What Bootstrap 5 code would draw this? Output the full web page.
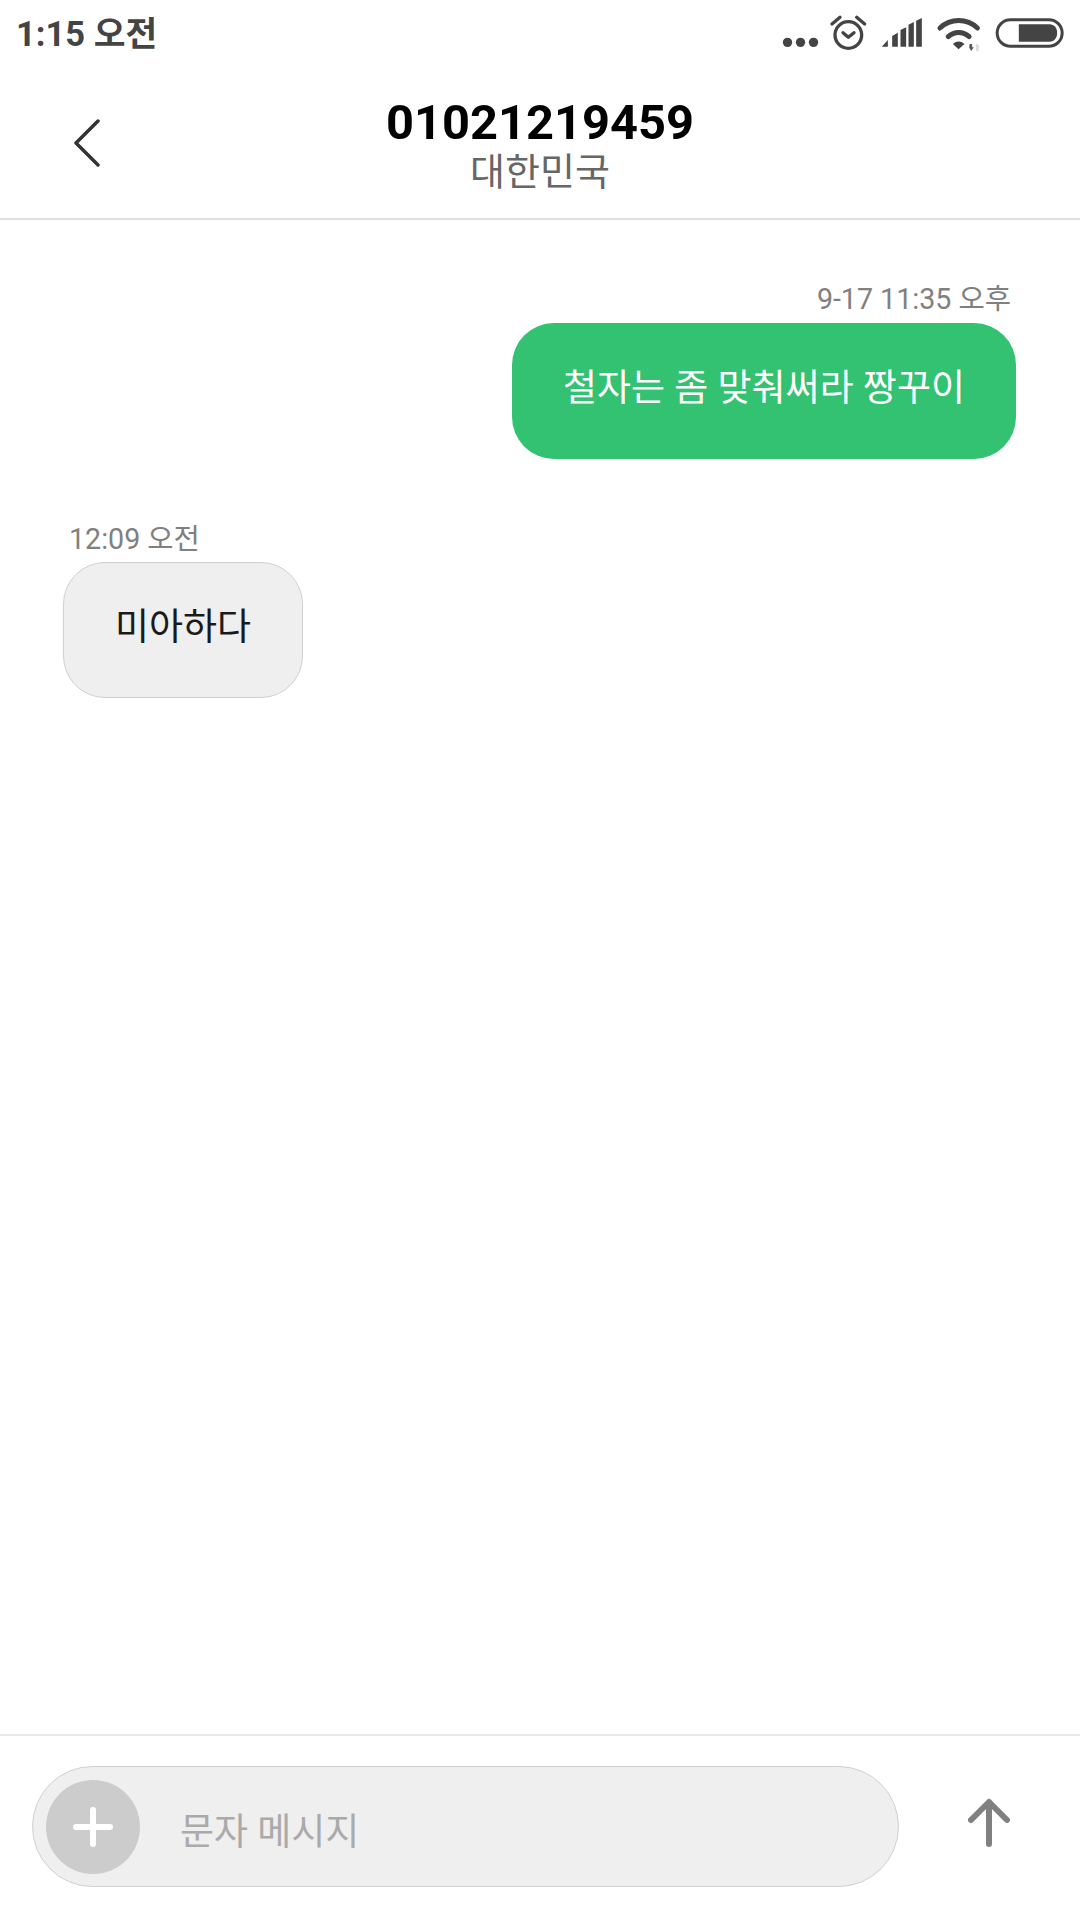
<!DOCTYPE html>
<html lang="ko">
<head>
    <meta charset="UTF-8" />
    <meta name="viewport" content="width=device-width, initial-scale=1" />
    <title>01021219459</title>

    <!-- Bootstrap 5 CSS -->
    <link href="https://cdn.jsdelivr.net/npm/bootstrap@5.3.0/dist/css/bootstrap.min.css" rel="stylesheet">

    <style>
        body {
            background-color: #fff;
            font-family: Roboto, "Noto Sans CJK KR", sans-serif;
        }
        .phone-screen { width: 1080px; height: 1920px; }
        .status-row { height: 62px; padding: 0 12px 0 16px; }
        .status-time { font-size: 34.5px; font-weight: 700; color: #444; line-height: 68px; }
        .top-header {
            height: 158px;
            border-bottom: 2px solid #e0e0e0;
            display: grid;
            grid-template-columns: 1fr auto 1fr;
            padding-top: 10px;
        }
        .back-btn { padding-left: 73px; margin-bottom: 4px; }
        .peer-number { font-size: 48.8px; font-weight: 700; color: #000; line-height: 54px; }
        .peer-country { font-size: 38px; color: #666; line-height: 44px; }
        .chat-area { padding: 61px 64px 0 63px; }
        .msg-time { font-size: 28.6px; color: #808080; line-height: 36px; margin-bottom: 6px; }
        .msg-time-in { padding-left: 6px; margin-top: 62px; margin-bottom: 5px; }
        .msg-time-out { padding-right: 5px; }
        .bubble-out, .bubble-in {
            height: 136px;
            border-radius: 42px;
            font-size: 37px;
            padding-bottom: 5px;
        }
        .bubble-out { background-color: #33c172; color: #fff; width: 504px; }
        .bubble-in { background-color: #efefef; color: #1a1a1a; width: 240px; border: 1px solid #d0d0d0; }
        .compose-bar { height: 186px; border-top: 2px solid #e8e8e8; padding: 30px 0 0 32px; }
        .compose-box {
            width: 867px;
            height: 121px;
            background-color: #efefef;
            border: 1px solid #d0d0d0;
            border-radius: 61px;
            padding-left: 13px;
        }
        .plus-circle { width: 94px; height: 94px; background-color: #cccccc; }
        .compose-hint { font-size: 37px; color: #aaa; margin-left: 40px; padding-top: 12px; }
        .send-btn { margin-left: 69px; margin-top: 32px; }
    </style>
</head>
<body class="m-0">

<div class="phone-screen d-flex flex-column">

    <!-- status bar -->
    <div class="status-row d-flex justify-content-between">
        <div class="status-time">1:15 오전</div>
        <div class="d-flex">
            <svg width="47" height="70" viewBox="60 0 140 210" fill="#444"><circle cx="85" cy="127" r="14"/><circle cx="124" cy="127" r="14"/><circle cx="163" cy="127" r="14"/></svg>
            <svg width="50" height="70" viewBox="200 0 150 210" fill="none" stroke="#444" stroke-width="10" stroke-linecap="round" stroke-linejoin="round"><circle cx="267" cy="105" r="40"/><path d="M218 72 242 52M292 52 316 72M251 98 267 112 284 98"/></svg>
            <svg width="57" height="70" viewBox="350 0 170 210" fill="#444"><path d="M367 140 385 120V140ZM398 140V108L415 98V140ZM423 140V90L440 82V140ZM447 140V74L463 66V140ZM470 140V62L487 54V140Z"/></svg>
            <svg width="58" height="70" viewBox="520 0 175 210"><path d="M541 84C573 54 622 54 654 84M566 110C584 93 611 93 629 110" fill="none" stroke="#444" stroke-width="15" stroke-linecap="round"/><path d="M580 132C591 122 604 122 615 132L597 148Z" fill="#444"/><path d="M631 132H638V142H643L635 153 629 142Z" fill="#555"/><path d="M650 153V132H654L662 142H658V153Z" fill="#ddd"/></svg>
            <svg width="77" height="70" viewBox="695 0 230 210"><rect x="713" y="59" width="195" height="80" rx="40" fill="none" stroke="#444" stroke-width="9"/><path d="M778 73H870C885 73 893 85 893 99S885 125 870 125H778Z" fill="#444"/></svg>
        </div>
    </div>

    <!-- conversation header -->
    <div class="top-header align-items-center">
        <div class="back-btn">
            <svg width="27" height="48" viewBox="0 0 27 48" fill="none" stroke="#333" stroke-width="3.5" stroke-linecap="round" stroke-linejoin="round"><path d="M25 2 3 24 25 46"/></svg>
        </div>
        <div class="text-center">
            <div class="peer-number">01021219459</div>
            <div class="peer-country">대한민국</div>
        </div>
        <div></div>
    </div>

    <!-- messages -->
    <div class="chat-area flex-grow-1 d-flex flex-column">
        <div class="msg-time msg-time-out text-end">9-17 11:35 오후</div>
        <div class="bubble-out align-self-end d-flex align-items-center justify-content-center">철자는 좀 맞춰써라 짱꾸이</div>
        <div class="msg-time msg-time-in">12:09 오전</div>
        <div class="bubble-in d-flex align-items-center justify-content-center">미아하다</div>
    </div>

    <!-- compose -->
    <div class="compose-bar d-flex align-items-start">
        <div class="compose-box d-flex align-items-center">
            <div class="plus-circle rounded-circle d-flex align-items-center justify-content-center">
                <svg width="40" height="40" viewBox="0 0 40 40" stroke="#fff" stroke-width="6" stroke-linecap="round"><path d="M3 20H37M20 3V37"/></svg>
            </div>
            <div class="compose-hint">문자 메시지</div>
        </div>
        <div class="send-btn">
            <svg width="42" height="50" viewBox="0 0 42 50" fill="none" stroke="#808080" stroke-width="6" stroke-linecap="round" stroke-linejoin="round"><path d="M21 46V4M3 22 21 4 39 22"/></svg>
        </div>
    </div>
</div>

<script src="https://cdn.jsdelivr.net/npm/bootstrap@5.3.0/dist/js/bootstrap.bundle.min.js"></script>
</body>
</html>
